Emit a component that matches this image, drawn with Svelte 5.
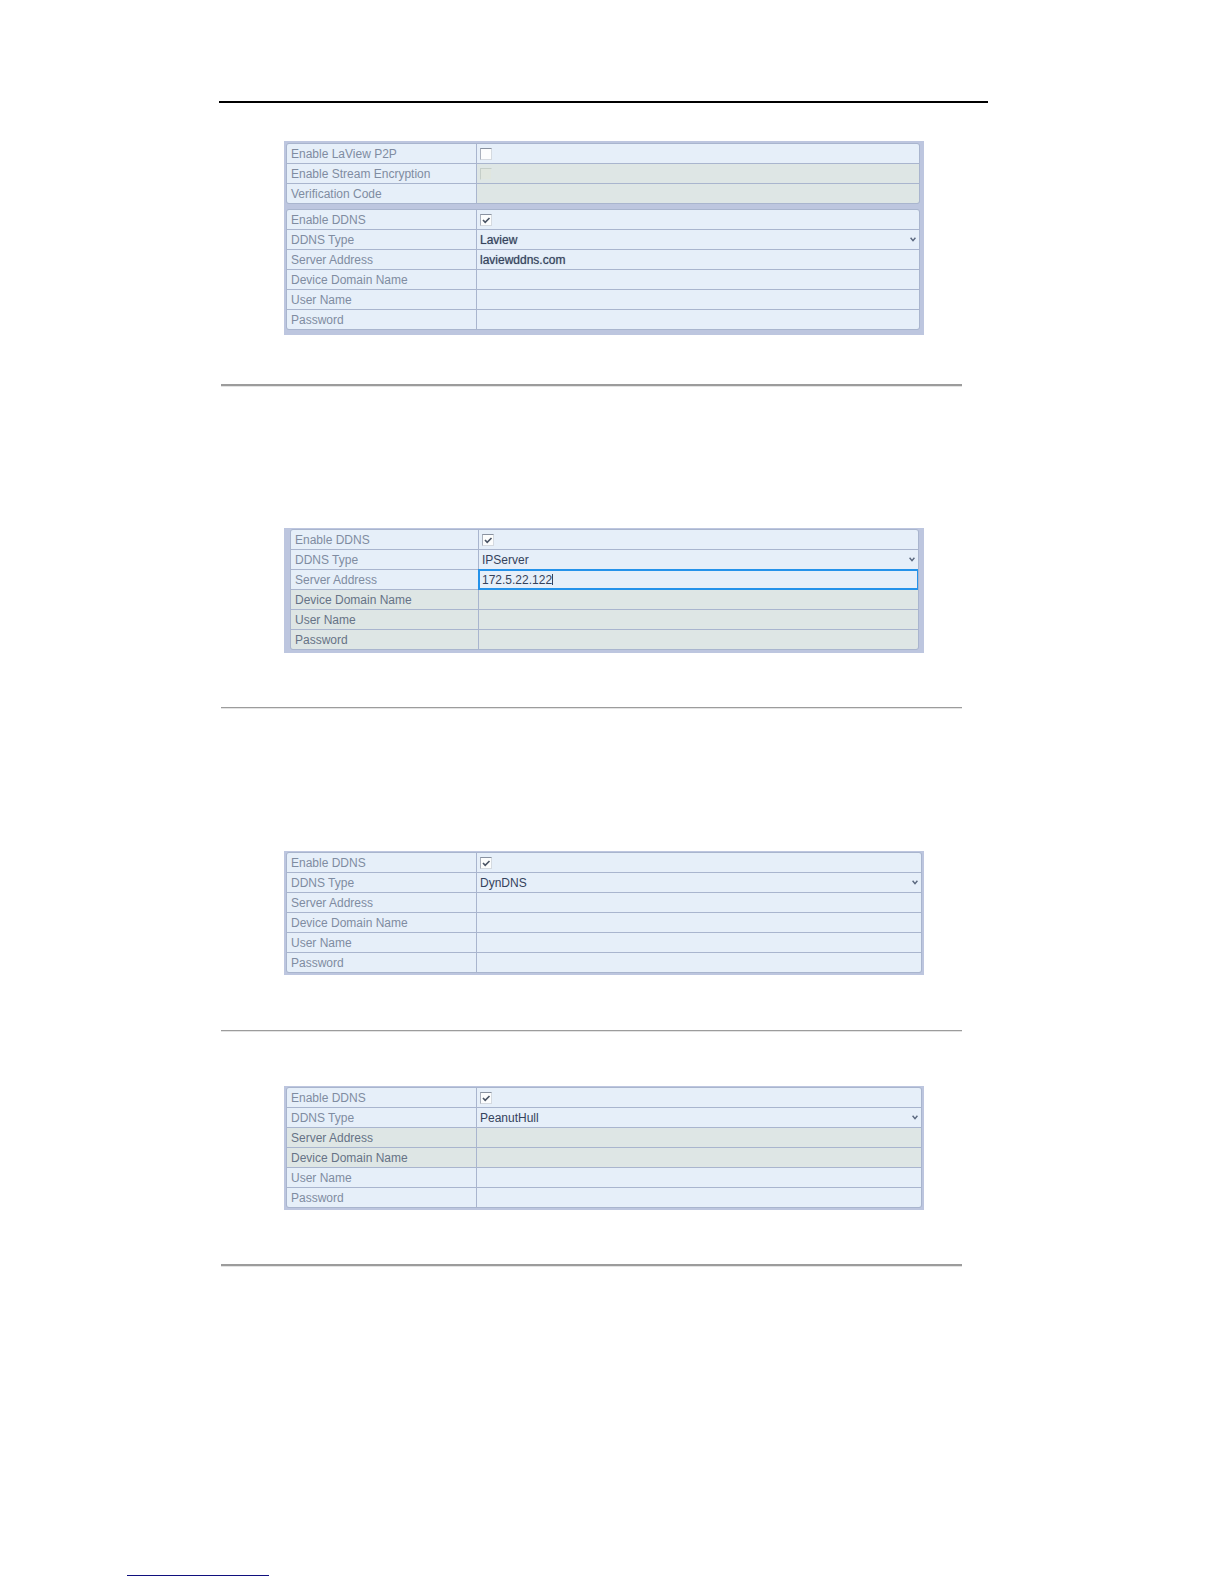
<script>
    const types = ['Laview', 'IPServer', 'DynDNS', 'PeanutHull'];

    function ddns(type, address = '', disabled = []) {
        return [
            { label: 'Enable DDNS', kind: 'check', value: true },
            { label: 'DDNS Type', kind: 'select', value: type },
            { label: 'Server Address', kind: 'text', value: address },
            { label: 'Device Domain Name', kind: 'text', value: '' },
            { label: 'User Name', kind: 'text', value: '' },
            { label: 'Password', kind: 'password', value: '' }
        ].map((row) => ({ ...row, disabled: disabled.includes(row.label) }));
    }

    const p2p = [
        { label: 'Enable LaView P2P', kind: 'check', value: false },
        { label: 'Enable Stream Encryption', kind: 'check', value: false, locked: true },
        { label: 'Verification Code', kind: 'text', value: '', locked: true }
    ];

    const ipServer = ddns('IPServer', '172.5.22.122', ['Device Domain Name', 'User Name', 'Password']);
    ipServer[2].editing = true;

    let panels = [
        { name: 'laview', rule: 'thick', groups: [p2p, ddns('Laview', 'laviewddns.com')] },
        { name: 'ipserver', rule: 'thin', groups: [ipServer] },
        { name: 'dyndns', rule: 'thin', groups: [ddns('DynDNS')] },
        { name: 'peanuthull', rule: 'thick', groups: [ddns('PeanutHull', '', ['Server Address', 'Device Domain Name'])] }
    ];
</script>

<main>
    <hr class="page-rule" />

    {#each panels as panel}
        <section class={panel.name}>
            <form class="panel" autocomplete="off" on:submit|preventDefault>
                {#each panel.groups as group, g}
                    <div class="group">
                        {#each group as row, r}
                            {@const id = `${panel.name}-${g}-${r}`}
                            <div class="row" class:disabled={row.disabled} class:locked={row.locked}>
                                <label for={id}>{row.label}</label>
                                <div class="value" class:editing={row.editing}>
                                    {#if row.kind === 'check'}
                                        <span class="check">
                                            <input {id} type="checkbox" bind:checked={row.value} disabled={row.locked} />
                                            {#if row.value}
                                                <svg width="12" height="12" viewBox="0 0 12 12" aria-hidden="true">
                                                    <path d="M3 6 L5.2 8.4 L9.5 4" fill="none" stroke="#4b5565" stroke-width="1.6" />
                                                </svg>
                                            {/if}
                                        </span>
                                    {:else if row.kind === 'select'}
                                        <select {id} bind:value={row.value}>
                                            {#each types as type}
                                                <option value={type}>{type}</option>
                                            {/each}
                                        </select>
                                        <svg class="arrow" width="6" height="5" viewBox="0 0 6 5" aria-hidden="true">
                                            <path d="M0.6 0.8 L3 3.7 L5.4 0.8" fill="none" stroke="#59667d" stroke-width="1.4" />
                                        </svg>
                                    {:else if row.kind === 'password'}
                                        <input {id} type="password" bind:value={row.value} disabled={row.disabled} />
                                    {:else}
                                        <input {id} type="text" bind:value={row.value} disabled={row.disabled || row.locked} />
                                        {#if row.editing}
                                            <span class="caret"></span>
                                        {/if}
                                    {/if}
                                </div>
                            </div>
                        {/each}
                    </div>
                {/each}
            </form>
            <hr class={panel.rule} />
        </section>
    {/each}
</main>

<footer>
    <hr />
</footer>

<style>
    :global(body) {
        background: #fff;
        font-family: 'Liberation Sans', Arial, sans-serif;
        font-size: 12px;
    }

    main {
        margin: 0 236px 0 219px;
        padding-top: 101px;
    }

    hr {
        margin: 0;
        border: 0;
    }

    .page-rule {
        height: 2px;
        background: #000;
    }

    section {
        margin: 0 26px 0 2px;
        padding-top: 141px;
    }

    .laview {
        padding-top: 38px;
    }

    .dyndns {
        padding-top: 142px;
    }

    .peanuthull {
        padding-top: 54px;
    }

    .thick,
    .thin {
        border-top: 1px solid #9c9c9c;
        border-bottom: 1px solid #e4e4e4;
    }

    .thick {
        border-top-width: 2px;
    }

    .panel {
        display: flex;
        flex-direction: column;
        gap: 5px;
        margin: 0 38px 54px 63px;
        padding: 1px 2px 2px;
        background: #bdc6df;
    }

    .laview .panel {
        margin-bottom: 49px;
        padding: 2px 4px 5px 2px;
    }

    .ipserver .panel {
        padding: 1px 5px 3px 6px;
    }

    .dyndns .panel {
        margin-bottom: 55px;
    }

    .group {
        display: flex;
        flex-direction: column;
        gap: 1px;
        border: 1px solid #a9b5ce;
        border-radius: 3px;
        background: #a9b5ce;
        overflow: hidden;
    }

    .row {
        display: grid;
        grid-template-columns: 189px 1fr;
        gap: 1px;
        height: 19px;
    }

    .ipserver .row {
        grid-template-columns: 187px 1fr;
    }

    label {
        padding: 2px 0 0 4px;
        background: #e6eff9;
        color: #7f8ca1;
        line-height: 17px;
    }

    .value {
        display: flex;
        align-items: center;
        min-width: 0;
        padding: 0 3px;
        background: #e6eff9;
        color: #35435c;
    }

    .disabled label {
        background: #dee6e5;
        color: #667386;
    }

    .disabled .value,
    .locked .value {
        background: #dee6e5;
    }

    .editing {
        outline: 2px solid #2492ea;
        outline-offset: -1px;
        z-index: 1;
    }

    input,
    select {
        flex: 1;
        min-width: 0;
        height: 19px;
        margin: 0;
        padding: 0;
        border: 0;
        outline: 0;
        background: transparent;
        color: inherit;
        font: inherit;
        appearance: none;
    }

    .laview input,
    .laview select {
        text-shadow: 0 0 1px #7f8ca1;
    }

    .editing input {
        flex: none;
        field-sizing: content;
    }

    .caret {
        width: 1px;
        height: 11px;
        background: #35435c;
    }

    .check {
        display: grid;
    }

    .check input,
    .check svg {
        grid-area: 1 / 1;
        box-sizing: border-box;
        width: 12px;
        height: 12px;
    }

    .check input {
        border: 1px solid #d5dae0;
        border-top-color: #8992a0;
        border-left-color: #a9b0bc;
        background: #fcfdfd;
    }

    .check input:disabled {
        border-color: #dee6e5;
        border-top-color: #c5cec8;
        border-left-color: #c5cec8;
        background: #e0e6df;
    }

    .check svg,
    .arrow {
        pointer-events: none;
    }

    footer {
        padding: 308px 0 8px 127px;
    }

    footer hr {
        width: 142px;
        height: 1px;
        background: #10107e;
    }
</style>
